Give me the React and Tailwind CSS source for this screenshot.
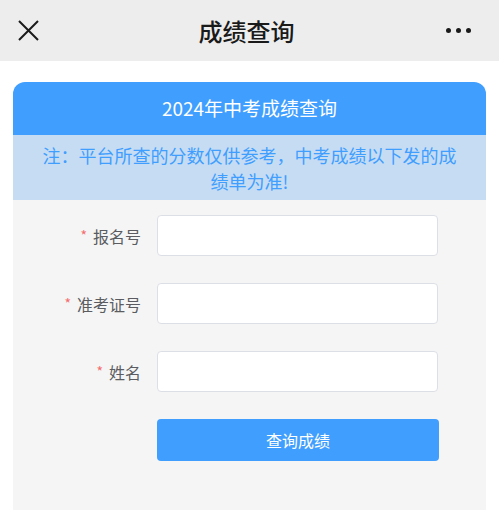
import React from 'react';

const font = { fontFamily: '"Noto Sans CJK SC", "Noto Sans", sans-serif' };

const Field = ({ label }) => (
  <div className="flex items-center">
    <div className="w-[128px] flex justify-end items-center text-[16px] text-[#5a5c61]">
      <span className="text-[#f56c6c] mr-[6px] text-[14px]">*</span>
      <span>{label}</span>
    </div>
    <input
      className="ml-[16px] w-[281px] h-[41px] bg-white border border-[#dcdfe6] rounded-[4px] outline-none px-3"
      type="text"
    />
  </div>
);

export default function App() {
  return (
    <div className="w-[499px] h-[510px] overflow-hidden bg-white" style={font}>
      {/* top bar */}
      <div className="h-[61px] bg-[#ededed] flex items-center justify-between px-[18px]">
        <svg width="21" height="21" viewBox="0 0 21 21" className="text-[#1a1a1a]">
          <path d="M1 1 L20 20 M20 1 L1 20" stroke="currentColor" strokeWidth="2" fill="none" />
        </svg>
        <div className="text-[24px] font-medium text-[#1a1a1a] leading-none pl-[8px]">成绩查询</div>
        <div className="flex gap-[5px] pr-[10px]">
          <span className="w-[5px] h-[5px] rounded-full bg-[#1a1a1a]" />
          <span className="w-[5px] h-[5px] rounded-full bg-[#1a1a1a]" />
          <span className="w-[5px] h-[5px] rounded-full bg-[#1a1a1a]" />
        </div>
      </div>

      <div className="px-[13px] pt-[21px]">
        <div className="rounded-t-[12px] overflow-hidden">
          <div className="h-[53px] bg-[#409eff] flex items-center justify-center text-white text-[19px]">
            2024年中考成绩查询
          </div>
          <div className="h-[65px] bg-[#c6dcf3] flex items-center justify-center text-center text-[#409eff] text-[18px] leading-[26px] px-[26px]">
            注：平台所查的分数仅供参考，中考成绩以下发的成绩单为准!
          </div>
          <div className="bg-[#f5f5f5] pt-[15px] pb-[80px] flex flex-col gap-[27px]">
            <Field label="报名号" />
            <Field label="准考证号" />
            <Field label="姓名" />
            <div className="pl-[144px]">
              <button className="w-[282px] h-[42px] bg-[#409eff] rounded-[4px] text-white text-[16px]">
                查询成绩
              </button>
            </div>
          </div>
        </div>
      </div>
    </div>
  );
}
